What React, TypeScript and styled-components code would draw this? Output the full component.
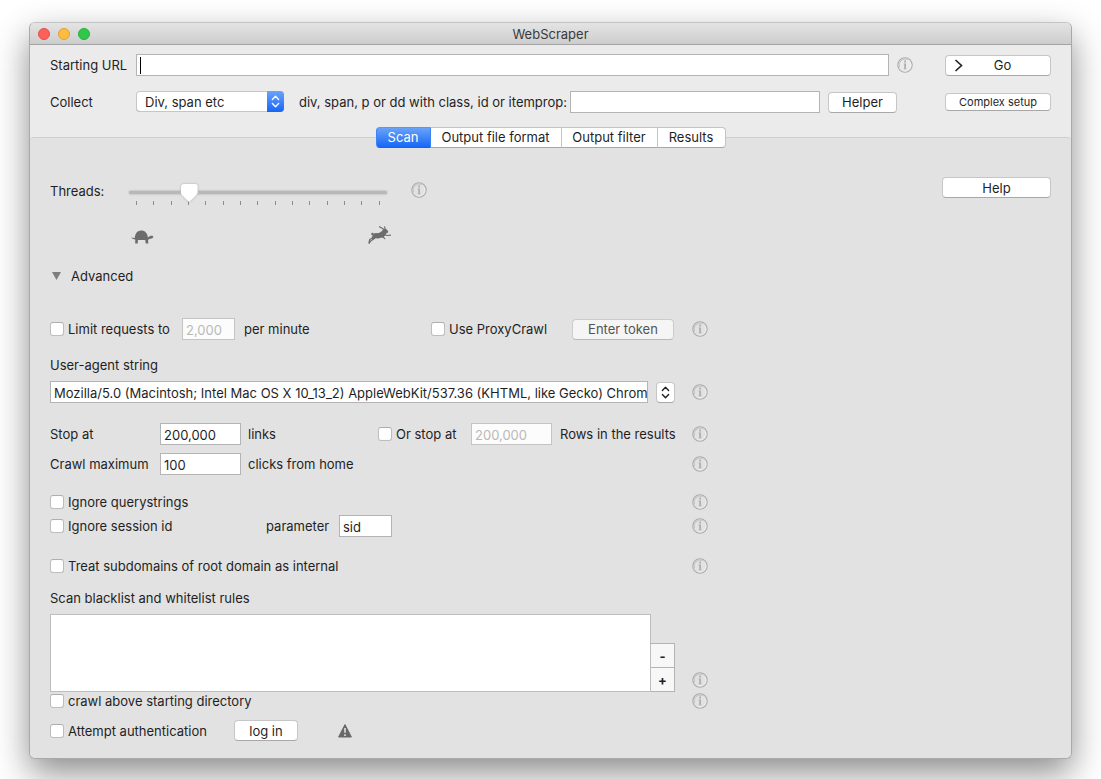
import React, { useState } from 'react';
import styled, { createGlobalStyle, css } from 'styled-components';

const GlobalStyle = createGlobalStyle`
  *, *::before, *::after { box-sizing: border-box; }
  body {
    margin: 0;
    background: #ffffff;
    color: #1f1f1f;
    font: 13px/18px Inter, "Liberation Sans", sans-serif;
  }
  button, input, select, textarea {
    margin: 0;
    font: inherit;
    color: inherit;
  }
  button { cursor: default; }
`;

const Desktop = styled.div`
  display: flex;
  min-height: 100vh;
  padding: 22px 29px 20px;
`;

const Window = styled.main`
  flex: 1;
  min-width: 0;
  display: flex;
  flex-direction: column;
  border: 1px solid #a9a9a9;
  border-top-color: #c4c4c4;
  border-radius: 6px;
  background: #ebebeb;
  box-shadow: 0 14px 34px rgba(0, 0, 0, 0.45);
`;

const TitleBar = styled.header`
  display: grid;
  grid-template-columns: 1fr auto 1fr;
  align-items: center;
  height: 22px;
  padding: 0 8px;
  border-bottom: 1px solid #a4a4a4;
  border-radius: 5px 5px 0 0;
  background: linear-gradient(#e4e4e4, #cdcdcd);
`;

const Title = styled.h1`
  margin: 0;
  font-size: 13px;
  font-weight: 400;
  color: #3a3a3a;
`;

const Lights = styled.div`
  display: flex;
  gap: 8px;
`;

const Light = styled.button<{ $fill: string; $edge: string }>`
  width: 12px;
  height: 12px;
  padding: 0;
  border: 1px solid ${(p) => p.$edge};
  border-radius: 50%;
  background: ${(p) => p.$fill};
`;

const Setup = styled.section`
  display: flex;
  flex-direction: column;
  gap: 15px;
  padding: 9px 20px 14px;
`;

const Row = styled.div<{ $top?: number; $height?: number }>`
  display: flex;
  align-items: center;
  height: ${(p) => p.$height ?? 22}px;
  margin-top: ${(p) => p.$top ?? 0}px;
  white-space: nowrap;
`;

const Label = styled.label<{ $width?: number; $gap?: number }>`
  flex: none;
  width: ${(p) => (p.$width ? `${p.$width}px` : 'auto')};
  padding-left: ${(p) => p.$gap ?? 0}px;
`;

const TextField = styled.input<{ $width?: number }>`
  ${(p) =>
    p.$width
      ? css`
          flex: none;
          width: ${p.$width}px;
        `
      : css`
          flex: 1;
          min-width: 0;
        `}
  height: 22px;
  padding: 2px 0 0 3px;
  border: 1px solid #b4b4b4;
  border-radius: 0;
  outline: none;
  background: #ffffff;
  &:disabled {
    color: #b9b9b9;
    border-color: #c4c4c4;
    background: #fcfcfc;
  }
`;

const UrlField = styled.div`
  flex: 1;
  display: flex;
  align-items: center;
  height: 22px;
  padding-left: 3px;
  border: 1px solid #b4b4b4;
  background: #ffffff;
  input {
    height: 20px;
    padding: 0 3px;
    border: 0;
  }
`;

const Caret = styled.span`
  width: 1px;
  height: 17px;
  background: #000000;
`;

const PushButton = styled.button<{ $width: number; $small?: boolean; $gap?: number }>`
  flex: none;
  display: flex;
  align-items: center;
  justify-content: center;
  width: ${(p) => p.$width}px;
  height: ${(p) => (p.$small ? 18 : 21)}px;
  margin-left: ${(p) => p.$gap ?? 0}px;
  padding: 0;
  border: 1px solid #c6c6c6;
  border-bottom-color: #a8a8a8;
  border-radius: 4px;
  background: #ffffff;
  font-size: ${(p) => (p.$small ? 11 : 13)}px;
  &:disabled {
    color: #545454;
    border-color: #cccccc;
    border-bottom-color: #b8b8b8;
    background: #f5f5f5;
  }
`;

const GoButton = styled(PushButton)`
  justify-content: flex-start;
  padding-left: 8px;
  span {
    flex: 1;
    padding-right: 8px;
  }
`;

const SelectBox = styled.div`
  flex: none;
  align-self: flex-start;
  display: flex;
  width: 148px;
  height: 21px;
  border-radius: 4px;
  background: #ffffff;
  box-shadow: inset 0 0 0 1px #c6c6c6, inset 0 -1px 0 #a8a8a8;
  overflow: hidden;
  select {
    flex: 1;
    padding: 0 0 0 9px;
    border: 0;
    outline: none;
    appearance: none;
    background: transparent;
  }
`;

const SelectArrows = styled.span`
  display: flex;
  align-items: center;
  justify-content: center;
  width: 17px;
  color: #ffffff;
  background: linear-gradient(#6ba4f8, #1665f6);
`;

const TabBar = styled.div`
  position: relative;
  z-index: 1;
  align-self: center;
  display: flex;
  height: 21px;
  margin-bottom: -11px;
`;

const Tab = styled.button<{ $width: number; $active: boolean }>`
  width: ${(p) => p.$width}px;
  padding: 0 0 1px;
  border: 1px solid #c4c4c4;
  border-bottom-color: #a8a8a8;
  border-left-width: 0;
  background: #ffffff;
  &:first-child { border-left-width: 1px; border-radius: 4px 0 0 4px; }
  &:last-child { border-radius: 0 4px 4px 0; }
  ${(p) =>
    p.$active &&
    css`
      color: #ffffff;
      border-color: #5a97f5 #3c83f6 #1a63e6;
      background: linear-gradient(#69a2f8, #1767f7);
    `}
`;

const Panel = styled.section`
  flex: 1;
  display: flex;
  justify-content: space-between;
  align-items: flex-start;
  gap: 20px;
  padding: 0 20px 17px;
  border-top: 1px solid #cfcfcf;
  border-radius: 4px 4px 5px 5px;
  background: #e2e2e2;
`;

const Form = styled.form`
  flex: 0 1 658px;
  min-width: 0;
  display: flex;
  flex-direction: column;
  padding-top: 44px;
`;

const Aside = styled.aside`
  padding-top: 39px;
`;

const Threads = styled.div`
  display: flex;
  align-items: flex-start;
`;

const SliderColumn = styled.div`
  display: flex;
  flex-direction: column;
  width: 258px;
  margin-right: 22px;
`;

const Slider = styled.input`
  width: 100%;
  height: 21px;
  outline: none;
  appearance: none;
  background: transparent;
  filter: drop-shadow(0 0 1px rgba(0, 0, 0, 0.25));
  &::-webkit-slider-runnable-track {
    height: 3px;
    border-radius: 2px;
    background: #b8b8b8;
  }
  &::-webkit-slider-thumb {
    appearance: none;
    width: 17px;
    height: 18px;
    margin-top: -7px;
    border-radius: 3px;
    background: #ffffff;
    clip-path: polygon(0 0, 100% 0, 100% 50%, 90% 64%, 50% 100%, 10% 64%, 0 50%);
  }
`;

const Ticks = styled.div`
  display: flex;
  justify-content: space-between;
  margin-top: -2px;
  padding: 0 7px;
`;

const Tick = styled.span`
  width: 1px;
  height: 4px;
  background: #8c8c8c;
`;

const Speeds = styled.div`
  display: flex;
  justify-content: space-between;
  align-items: flex-end;
  height: 18px;
  margin: 21px -4px 0 2px;
  svg { display: block; }
`;

const Disclosure = styled.button`
  align-self: flex-start;
  display: flex;
  align-items: center;
  gap: 9px;
  height: 20px;
  margin-top: 22px;
  padding: 0 0 0 1px;
  border: 0;
  background: none;
`;

const Check = styled.label<{ $width?: number }>`
  flex: none;
  display: flex;
  align-items: center;
  gap: 4px;
  width: ${(p) => (p.$width ? `${p.$width}px` : 'auto')};
  input {
    flex: none;
    width: 14px;
    height: 14px;
    appearance: none;
    border: 1px solid #bdbdbd;
    border-top-color: #aeaeae;
    border-radius: 3px;
    background: #ffffff;
  }
  input:checked { background: #1767f7; }
`;

const Stepper = styled.button`
  display: flex;
  align-items: center;
  justify-content: center;
  width: 19px;
  height: 21px;
  margin: 0 17px 0 8px;
  padding: 0;
  border: 1px solid #c6c6c6;
  border-bottom-color: #a8a8a8;
  border-radius: 4px;
  background: #ffffff;
`;

const InfoButton = styled.button<{ $gap?: number }>`
  flex: none;
  width: 16px;
  height: 16px;
  margin-left: ${(p) => (p.$gap ? `${p.$gap}px` : 'auto')};
  padding: 0;
  border: 0;
  background: none;
  svg { display: block; }
`;

const Rules = styled.div`
  display: flex;
  align-items: flex-end;
  margin-top: 7px;
`;

const RulesText = styled.textarea`
  flex: 1;
  min-width: 0;
  height: 78px;
  padding: 3px;
  border: 1px solid #bdbdbd;
  border-radius: 0;
  outline: none;
  resize: none;
  background: #ffffff;
`;

const RuleButtons = styled.div`
  display: flex;
  flex-direction: column;
  width: 24px;
  margin-right: 17px;
`;

const RuleButton = styled.button`
  height: 25px;
  padding: 0;
  border: 1px solid #b4b4b4;
  border-left: 0;
  background: #f7f7f7;
  font-weight: 700;
  &:first-child { height: 24px; border-bottom: 0; }
`;

const RulesInfo = styled.div`
  display: flex;
  padding-bottom: 4px;
`;

const Warning = styled.span`
  margin-left: 40px;
  svg { display: block; }
`;

function Info({ about, gap }: { about: string; gap?: number }) {
  return (
    <InfoButton type="button" aria-label={`About ${about}`} $gap={gap}>
      <svg width="16" height="16" viewBox="0 0 16 16" fill="none">
        <circle cx="8" cy="8" r="7.2" stroke="#ababab" strokeWidth="1.1" />
        <path d="M2.6 10.4A6 6 0 0 1 10.6 2.6" stroke="#c0c0c0" strokeWidth=".9" />
        <path d="M5.4 13.4A6 6 0 0 0 13.4 5.4" stroke="#f2f2f2" strokeWidth=".7" />
        <path d="M8.1 3.6v1.8M8.1 6.6V12" stroke="#acacac" strokeWidth="1.7" />
        <path d="M6.5 7H8M6.5 12h3.2" stroke="#b8b8b8" strokeWidth=".8" />
      </svg>
    </InfoButton>
  );
}

function Arrows() {
  return (
    <svg width="9" height="13" viewBox="0 0 9 13" fill="none" stroke="currentColor" strokeWidth="1.4" strokeLinecap="round" strokeLinejoin="round">
      <path d="M1.4 4.4 4.5 1.3l3.1 3.1M1.4 8.6l3.1 3.1 3.1-3.1" />
    </svg>
  );
}

function Turtle() {
  return (
    <svg width="23" height="14" viewBox="0 0 23 14" fill="#6c6c6c" role="img" aria-label="Slow">
      <path d="M3.8 8C4 3.5 6.4.4 10.2.4s6.3 2.7 6.7 7c1-.3 1.6-1.2 2.8-1.6 1.5-.4 2.6.3 2.6 1.1 0 .9-1.1 1.5-2.3 1.6-.9.1-1.5.8-2.9 1.2l.2 3.9h-2.5L14.2 9.9H7l-.3 3.7H4.2l.1-4C2.6 9.2 1.1 8.5 0 7.4c1.5 0 2.5.2 3.8.6Z" />
    </svg>
  );
}

function Hare() {
  return (
    <svg width="23" height="18" viewBox="0 0 23 18" fill="#6c6c6c" role="img" aria-label="Fast">
      <path d="M14.3 4.6c.6-1.2 1.7-1.7 2.9-1.5 1.6.2 2.8 1.4 3 2.7 0 .9-.8 1.5-2.1 1.6-.2 1-.5 1.6-1 2.2l-1.9 1.900-3.600.4c-1.500.7-2.900.6-4.100.2l-2.600 1.700-1.200-1.100C3.900 11.400 4.200 9.600 5.400 8.200 6.600 7.100 8 6.900 9.400 7.300c1.700-.1 3.300-.9 4.900-2.700Z" />
      <circle cx="4.5" cy="8" r="1.3" />
      <path
        d="M16.2 3.6 11.5.7M17.4 3.6 16.6.9M16 8.7l3.5.8 3-.3M14.5 10.5l2.3 2.1M5.5 11.2l-3.8 2.2-.8 3.8M7 12l-4.300 3-1.200 2"
        fill="none"
        stroke="#6c6c6c"
        strokeWidth="1.2"
        strokeLinecap="round"
        strokeLinejoin="round"
      />
    </svg>
  );
}

const lights = [
  { name: 'Close', fill: '#fc605b', edge: '#e34f4b' },
  { name: 'Minimize', fill: '#fdbc40', edge: '#e0a334' },
  { name: 'Zoom', fill: '#2fc84a', edge: '#28b03d' },
];

const tabs = [
  { name: 'Scan', width: 55 },
  { name: 'Output file format', width: 131 },
  { name: 'Output filter', width: 96 },
  { name: 'Results', width: 68 },
];

const userAgent =
  'Mozilla/5.0 (Macintosh; Intel Mac OS X 10_13_2) AppleWebKit/537.36 (KHTML, like Gecko) Chrome';

export default function App() {
  const [tab, setTab] = useState('Scan');

  return (
    <Desktop>
      <GlobalStyle />
      <Window>
        <TitleBar>
          <Lights>
            {lights.map((l) => (
              <Light key={l.name} aria-label={l.name} $fill={l.fill} $edge={l.edge} />
            ))}
          </Lights>
          <Title>WebScraper</Title>
        </TitleBar>

        <Setup>
          <Row>
            <Label htmlFor="url" $width={86}>Starting URL</Label>
            <UrlField>
              <Caret />
              <TextField id="url" type="text" />
            </UrlField>
            <Info about="the starting URL" gap={8} />
            <GoButton $width={106} $gap={32}>
              <svg width="9" height="13" viewBox="0 0 9 13" fill="none" stroke="#1f1f1f" strokeWidth="1.6">
                <path d="M1.5 1 7.5 6.5 1.5 12" />
              </svg>
              <span>Go</span>
            </GoButton>
          </Row>
          <Row>
            <Label htmlFor="collect" $width={86}>Collect</Label>
            <SelectBox>
              <select id="collect">
                <option>Div, span etc</option>
              </select>
              <SelectArrows><Arrows /></SelectArrows>
            </SelectBox>
            <Label htmlFor="selector" $width={286} $gap={15}>
              div, span, p or dd with class, id or itemprop:
            </Label>
            <TextField id="selector" type="text" />
            <PushButton $width={69} $gap={8}>Helper</PushButton>
            <PushButton $width={106} $gap={48} $small>Complex setup</PushButton>
          </Row>
        </Setup>

        <TabBar role="tablist">
          {tabs.map((t) => (
            <Tab
              key={t.name}
              role="tab"
              aria-selected={tab === t.name}
              $width={t.width}
              $active={tab === t.name}
              onClick={() => setTab(t.name)}
            >
              {t.name}
            </Tab>
          ))}
        </TabBar>

        <Panel>
          <Form onSubmit={(e) => e.preventDefault()}>
            <Threads>
              <Label htmlFor="threads" $width={79}>Threads:</Label>
              <SliderColumn>
                <Slider id="threads" type="range" min={0} max={14} defaultValue={3} />
                <Ticks>
                  {Array.from({ length: 15 }, (_, i) => (
                    <Tick key={i} />
                  ))}
                </Ticks>
                <Speeds>
                  <Turtle />
                  <Hare />
                </Speeds>
              </SliderColumn>
              <Info about="threads" gap={2} />
            </Threads>

            <Disclosure type="button" aria-expanded="true">
              <svg width="11" height="9" viewBox="0 0 11 9" fill="#7e7e7e">
                <path d="M1 0h9L5.5 8Z" />
              </svg>
              Advanced
            </Disclosure>

            <Row $top={32}>
              <Check $width={132}><input type="checkbox" />Limit requests to</Check>
              <TextField id="rate" type="text" $width={53} defaultValue="2,000" disabled />
              <Label htmlFor="rate" $width={196} $gap={9}>per minute</Label>
              <Check $width={141}><input type="checkbox" />Use ProxyCrawl</Check>
              <PushButton type="button" $width={102} disabled>Enter token</PushButton>
              <Info about="request limits" />
            </Row>

            <Row $top={16} $height={18}>
              <Label htmlFor="agent">User-agent string</Label>
            </Row>
            <Row $top={7}>
              <TextField id="agent" type="text" defaultValue={userAgent} />
              <Stepper type="button" aria-label="Choose user agent"><Arrows /></Stepper>
              <Info about="the user-agent string" />
            </Row>

            <Row $top={20}>
              <Label htmlFor="links" $width={110}>Stop at</Label>
              <TextField id="links" type="text" $width={81} defaultValue="200,000" />
              <Label htmlFor="links" $width={137} $gap={7}>links</Label>
              <Check $width={93}><input type="checkbox" />Or stop at</Check>
              <TextField id="rows" type="text" $width={81} defaultValue="200,000" disabled />
              <Label htmlFor="rows" $gap={8}>Rows in the results</Label>
              <Info about="stopping" />
            </Row>
            <Row $top={8}>
              <Label htmlFor="clicks" $width={110}>Crawl maximum</Label>
              <TextField id="clicks" type="text" $width={81} defaultValue="100" />
              <Label htmlFor="clicks" $gap={7}>clicks from home</Label>
              <Info about="crawl depth" />
            </Row>

            <Row $top={19} $height={16}>
              <Check><input type="checkbox" />Ignore querystrings</Check>
              <Info about="querystrings" />
            </Row>
            <Row $top={5}>
              <Check $width={216}><input type="checkbox" />Ignore session id</Check>
              <Label htmlFor="param" $width={73}>parameter</Label>
              <TextField id="param" type="text" $width={53} defaultValue="sid" />
              <Info about="session ids" />
            </Row>
            <Row $top={21} $height={16}>
              <Check><input type="checkbox" />Treat subdomains of root domain as internal</Check>
              <Info about="subdomains" />
            </Row>

            <Row $top={15} $height={18}>
              <Label htmlFor="rules">Scan blacklist and whitelist rules</Label>
            </Row>
            <Rules>
              <RulesText id="rules" />
              <RuleButtons>
                <RuleButton type="button" aria-label="Remove rule">-</RuleButton>
                <RuleButton type="button" aria-label="Add rule">+</RuleButton>
              </RuleButtons>
              <RulesInfo><Info about="rules" /></RulesInfo>
            </Rules>

            <Row $height={18}>
              <Check><input type="checkbox" />crawl above starting directory</Check>
              <Info about="the starting directory" />
            </Row>
            <Row $top={10} $height={21}>
              <Check $width={184}><input type="checkbox" />Attempt authentication</Check>
              <PushButton type="button" $width={64}>log in</PushButton>
              <Warning>
                <svg width="14" height="14" viewBox="0 0 14 14" role="img" aria-label="Warning">
                  <path d="M7 .6 13.4 13H.6Z" fill="#696969" stroke="#696969" strokeLinejoin="round" />
                  <path d="M7 4v4.8M7 10.2v1.8" stroke="#e2e2e2" strokeWidth="1.6" />
                </svg>
              </Warning>
            </Row>
          </Form>
          <Aside>
            <PushButton $width={109}>Help</PushButton>
          </Aside>
        </Panel>
      </Window>
    </Desktop>
  );
}
